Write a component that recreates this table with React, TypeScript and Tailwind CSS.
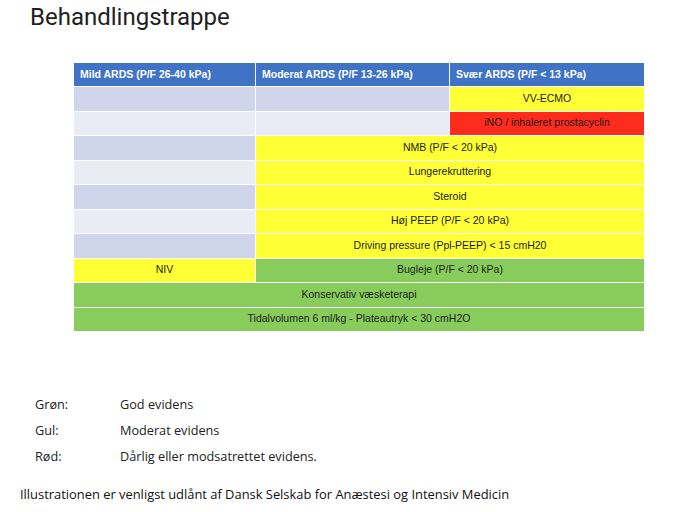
import React from 'react'

type Cell = { text?: string; span?: number; bg: string }

const DARK = 'bg-[#cfd5ea]'
const LIGHT = 'bg-[#e9ebf5]'
const YEL = 'bg-[#ffff35]'
const RED = 'bg-[#ff2b1c]'
const GRN = 'bg-[#88cd5c]'

const rows: Cell[][] = [
  [{ bg: DARK }, { bg: DARK }, { text: 'VV-ECMO', bg: YEL }],
  [{ bg: LIGHT }, { bg: LIGHT }, { text: 'iNO / inhaleret prostacyclin', bg: RED }],
  [{ bg: DARK }, { text: 'NMB (P/F < 20 kPa)', span: 2, bg: YEL }],
  [{ bg: LIGHT }, { text: 'Lungerekruttering', span: 2, bg: YEL }],
  [{ bg: DARK }, { text: 'Steroid', span: 2, bg: YEL }],
  [{ bg: LIGHT }, { text: 'Høj PEEP (P/F < 20 kPa)', span: 2, bg: YEL }],
  [{ bg: DARK }, { text: 'Driving pressure (Ppl-PEEP)  < 15 cmH20', span: 2, bg: YEL }],
  [{ text: 'NIV', bg: YEL }, { text: 'Bugleje (P/F < 20 kPa)', span: 2, bg: GRN }],
  [{ text: 'Konservativ væsketerapi', span: 3, bg: GRN }],
  [{ text: 'Tidalvolumen 6 ml/kg - Plateautryk < 30 cmH2O', span: 3, bg: GRN }],
]

const headers = ['Mild ARDS (P/F 26-40 kPa)', 'Moderat ARDS (P/F 13-26 kPa)', 'Svær ARDS (P/F < 13 kPa)']

const legend = [
  ['Grøn:', 'God evidens'],
  ['Gul:', 'Moderat evidens'],
  ['Rød:', 'Dårlig eller modsatrettet evidens.'],
]

export default function App() {
  return (
    <div className="w-[673px] h-[512px] bg-white overflow-hidden flex flex-col">
      <h1 className="pl-[30px] pt-[3px] text-[24px] leading-[28px] text-[#1e1e1e]" style={{ fontFamily: 'Roboto, sans-serif' }}>
        Behandlingstrappe
      </h1>

      {/* table */}
      <div
        className="ml-[74px] mt-[32px] grid grid-cols-[181px_193px_194px] gap-px w-[570px] text-[10.5px] text-[#1c1c1c]"
        style={{ fontFamily: '"Liberation Sans", Arial, sans-serif' }}
      >
        {headers.map((h) => (
          <div key={h} className="bg-[#3f73c6] h-[23px] flex items-center pl-[6px] font-bold text-white">
            {h}
          </div>
        ))}
        {rows.map((row, i) =>
          row.map((c, j) => (
            <div
              key={`${i}-${j}`}
              className={`${c.bg} h-[23.5px] flex items-center justify-center ${
                c.span === 2 ? 'col-span-2' : c.span === 3 ? 'col-span-3' : ''
              }`}
            >
              {c.text}
            </div>
          ))
        )}
      </div>

      {/* legend */}
      <div className="ml-[35px] mt-[64px] flex flex-col gap-[7px] text-[12.7px] text-[#222]" style={{ fontFamily: '"Open Sans", sans-serif' }}>
        {legend.map(([k, v]) => (
          <div key={k} className="flex h-[19px] items-center">
            <span className="w-[85px]">{k}</span>
            <span>{v}</span>
          </div>
        ))}
      </div>

      <p className="ml-[20px] mt-[19px] text-[12.9px] text-[#111]" style={{ fontFamily: '"Open Sans", sans-serif' }}>
        Illustrationen er venligst udlånt af Dansk Selskab for Anæstesi og Intensiv Medicin
      </p>
    </div>
  )
}
